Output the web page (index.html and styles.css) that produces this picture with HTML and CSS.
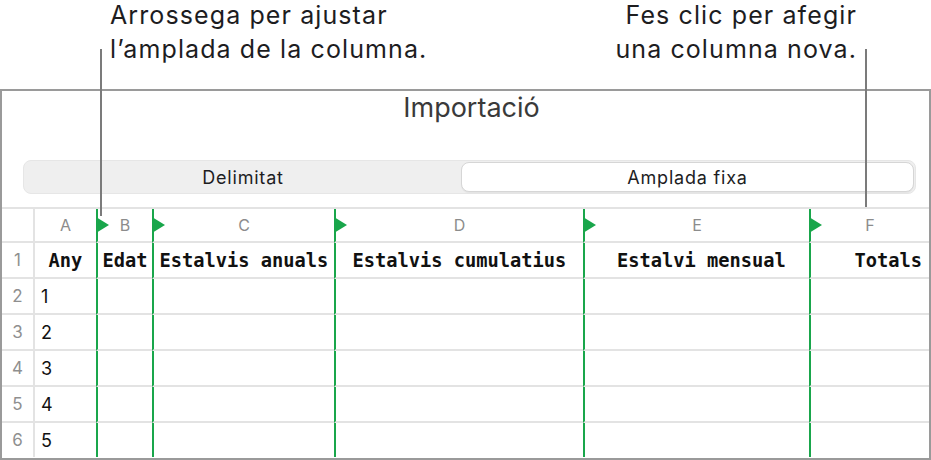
FILE: index.html
```html
<!DOCTYPE html>
<html lang="ca">
<head>
    <meta charset="UTF-8">
    <meta name="viewport" content="width=device-width, initial-scale=1.0">
    <title>Importació</title>
    <link rel="stylesheet" href="styles.css">
</head>
<body>
    <!-- Callouts above the dialog -->
    <div class="callouts">
        <p class="callout">Arrossega per ajustar<br>l’amplada de la columna.</p>
        <p class="callout callout-right">Fes clic per afegir<br>una columna nova.</p>
    </div>
    <span class="leader leader-drag"></span>
    <span class="leader leader-add"></span>

    <div class="panel">
        <h1 class="panel-title">Importació</h1>

        <div class="segmented">
            <button class="segment">Delimitat</button>
            <button class="segment selected">Amplada fixa</button>
        </div>

        <!-- Sheet preview -->
        <div class="sheet">
            <div class="cell rownum head"></div>
            <div class="cell col-a head">A</div>
            <div class="cell mark head">B</div>
            <div class="cell mark head">C</div>
            <div class="cell mark head">D</div>
            <div class="cell mark head">E</div>
            <div class="cell mark head">F</div>

            <div class="cell rownum">1</div>
            <div class="cell col-a title-cell">Any</div>
            <div class="cell mark title-cell">Edat</div>
            <div class="cell mark title-cell">Estalvis anuals</div>
            <div class="cell mark title-cell">Estalvis cumulatius</div>
            <div class="cell mark title-cell shifted">Estalvi mensual</div>
            <div class="cell mark title-cell right">Totals</div>

            <div class="cell rownum">2</div>
            <div class="cell col-a value">1</div>
            <div class="cell mark"></div>
            <div class="cell mark"></div>
            <div class="cell mark"></div>
            <div class="cell mark"></div>
            <div class="cell mark"></div>

            <div class="cell rownum">3</div>
            <div class="cell col-a value">2</div>
            <div class="cell mark"></div>
            <div class="cell mark"></div>
            <div class="cell mark"></div>
            <div class="cell mark"></div>
            <div class="cell mark"></div>

            <div class="cell rownum">4</div>
            <div class="cell col-a value">3</div>
            <div class="cell mark"></div>
            <div class="cell mark"></div>
            <div class="cell mark"></div>
            <div class="cell mark"></div>
            <div class="cell mark"></div>

            <div class="cell rownum">5</div>
            <div class="cell col-a value">4</div>
            <div class="cell mark"></div>
            <div class="cell mark"></div>
            <div class="cell mark"></div>
            <div class="cell mark"></div>
            <div class="cell mark"></div>

            <div class="cell rownum last">6</div>
            <div class="cell col-a value last">5</div>
            <div class="cell mark last"></div>
            <div class="cell mark last"></div>
            <div class="cell mark last"></div>
            <div class="cell mark last"></div>
            <div class="cell mark last"></div>
        </div>
    </div>
</body>
</html>
```

FILE: styles.css
```css
* {
    box-sizing: border-box;
}

body {
    position: relative;
    width: 931px;
    height: 460px;
    margin: 0;
    overflow: hidden;
    background-color: #fff;
    font-family: Inter, "Noto Sans", sans-serif;
    color: #1d1d1f;
}

.callouts {
    display: flex;
    justify-content: space-between;
    height: 89px;
    padding: 0 74px 0 110px;
}

.callout {
    margin: -2px 0 0;
    font-size: 25px;
    letter-spacing: 1.1px;
    line-height: 34px;
}

.callout-right {
    text-align: right;
}

.leader {
    position: absolute;
    top: 49px;
    width: 2px;
    background-color: #7b7b7b;
    z-index: 2;
}

.leader-drag {
    left: 100px;
    height: 167px;
}

.leader-add {
    left: 865px;
    height: 158px;
}

.panel {
    height: 371px;
    border: 2px solid #9a9a9a;
}

.panel-title {
    margin: 0;
    padding-left: 12px;
    font-size: 27px;
    font-weight: normal;
    line-height: 33px;
    text-align: center;
    color: #3a3a3a;
}

.segmented {
    display: grid;
    grid-template-columns: 436px 1fr;
    height: 34px;
    margin: 36px 13px 13px 21px;
    padding: 1px;
    background-color: #efefef;
    border: 1px solid #e6e6e6;
    border-radius: 8px;
}

.segment {
    border: none;
    background: none;
    font-family: inherit;
    font-size: 18px;
    letter-spacing: 0.8px;
    color: #1d1d1f;
    padding: 0;
}

.segment.selected {
    background-color: #fff;
    border: 1px solid #d6d6d6;
    border-radius: 8px;
    box-shadow: 0 1px 1px rgba(0, 0, 0, 0.05);
}

.sheet {
    display: grid;
    grid-template-columns: 31px 63px 56px 182px 249px 226px 1fr;
    grid-template-rows: 34px 36px 36px 36px 36px 36px 34px;
    border-top: 2px solid #e3e3e3;
}

.cell {
    position: relative;
    display: flex;
    align-items: center;
    justify-content: center;
    border-bottom: 2px solid #e3e3e3;
}

.cell.last {
    border-bottom: none;
}

.col-a {
    border-left: 2px solid #e3e3e3;
}

.mark {
    border-left: 2px solid #19a64b;
}

/* column handle on the header row */
.mark.head::after {
    content: "";
    position: absolute;
    left: -2px;
    top: 8px;
    border-left: 13px solid #19a64b;
    border-top: 8.5px solid transparent;
    border-bottom: 8.5px solid transparent;
}

.head {
    font-size: 16px;
    color: #8c8c8c;
}

.rownum {
    font-size: 17px;
    color: #8f8f8f;
}

.title-cell {
    font-family: "DejaVu Sans Mono", "Liberation Mono", monospace;
    font-weight: bold;
    font-size: 18.7px;
    color: #111;
    white-space: nowrap;
}

.title-cell.shifted {
    padding-left: 9px;
}

.title-cell.right {
    justify-content: flex-end;
    padding-right: 7px;
}

.value {
    justify-content: flex-start;
    padding-left: 6px;
    font-size: 18px;
    color: #111;
}
```
